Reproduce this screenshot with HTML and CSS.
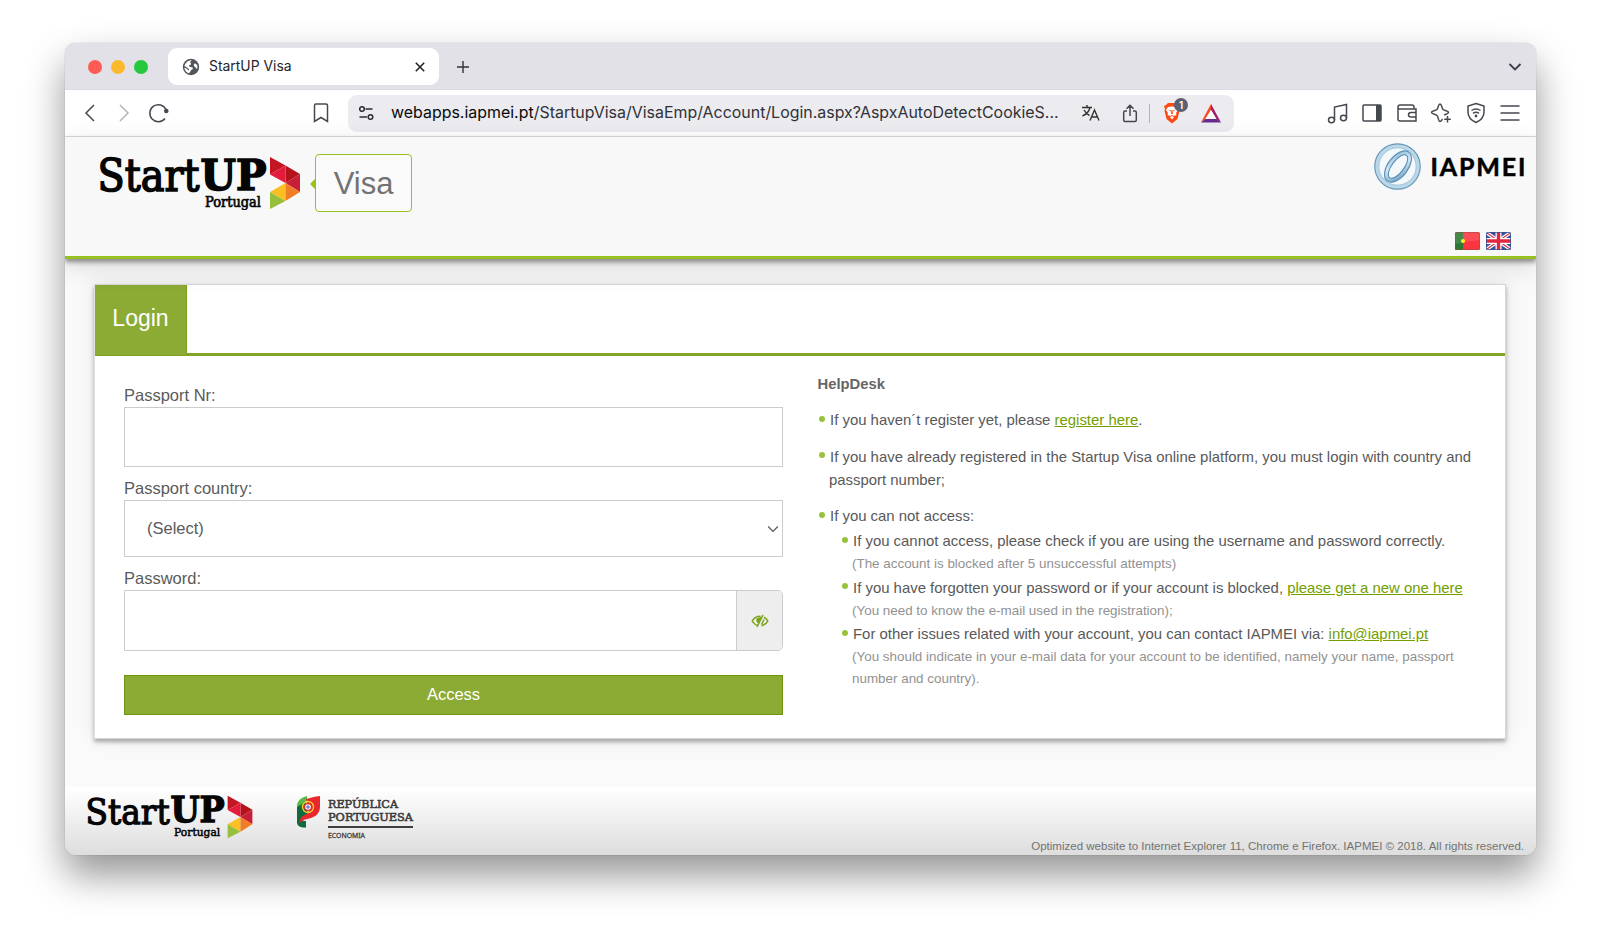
FILE: index.html
```html
<!DOCTYPE html>
<html lang="en">
<head>
<meta charset="utf-8">
<title>StartUP Visa</title>
<link rel="stylesheet" href="styles.css">
</head>
<body>
<svg class="defs" width="0" height="0">
  <symbol id="startup-logo" viewBox="0 0 204 54">
    <g font-family="'DejaVu Serif', serif" fill="#050505">
      <text x="-.5" y="35" font-size="44" textLength="102" lengthAdjust="spacingAndGlyphs" stroke="#050505" stroke-width="1.600">Start</text>
      <text x="102.500" y="33.500" font-size="43" font-weight="bold" textLength="66" lengthAdjust="spacingAndGlyphs" stroke="#050505" stroke-width="1.600">UP</text>
      <text x="107" y="50.500" font-size="14.500" textLength="56" lengthAdjust="spacingAndGlyphs" stroke="#050505" stroke-width=".7">Portugal</text>
    </g>
    <path fill="#c31622" d="M172 1L187.500 9.500L172 18.500Z"/>
    <path fill="#b5131c" d="M187.500 9.500L202 18L187.500 27Z"/>
    <path fill="#e31b3c" d="M172 18.500L187.500 9.500V27Z"/>
    <path fill="#c91f36" d="M187.500 27L202 18V36Z"/>
    <path fill="#fbbf24" d="M172 36L187.500 27V45Z"/>
    <path fill="#f07e26" d="M187.500 27L202 36L187.500 45Z"/>
    <path fill="#97bf3c" d="M172 36L187.500 45L172 53Z"/>
  </symbol>
</svg>
<div class="window">
  <div class="tabbar">
    <div class="lights"><i class="red"></i><i class="yellow"></i><i class="green"></i></div>
    <div class="tab">
      <svg width="18" height="18" viewBox="0 0 18 18"><circle cx="9" cy="9" r="8.200" fill="#51565c"/><path fill="#fff" d="M10 2.300C8.200 3.200 7.800 4.200 8.800 5.300C9.600 6.500 8.400 7 7.200 7.300C6.300 8 7 8.700 8.500 8.900L10.500 9.500C11.500 10.500 10.500 11.500 9.300 12C8.300 13 8.200 14.300 6.800 15.300C4.500 14.600 2.600 12.300 2.300 9.800L4.500 10.500C5.500 11 6 12.500 7 12.500C7.600 11 6 10.200 4.600 9.300L2.500 8.200C3 5 6 2.200 10 2.300ZM12.500 5.500C13.300 5.300 14.700 6 15.300 7.500C15.600 9 15.400 10 14.900 11C13.800 10.500 14 9 12.700 8.700C11.500 8 11.500 6.300 12.500 5.500Z"/></svg>
      <span>StartUP Visa</span>
      <svg width="12" height="12" viewBox="0 0 12 12"><path d="M1.800 1.800L10.200 10.200M10.200 1.800L1.800 10.200" stroke="#222" stroke-width="1.600"/></svg>
    </div>
    <svg class="plus" width="14" height="14" viewBox="0 0 14 14"><path d="M7 1V13M1 7H13" stroke="#333" stroke-width="1.400"/></svg>
    <svg class="more" width="14" height="10" viewBox="0 0 14 10"><path d="M1.500 2L7 7.500L12.500 2" fill="none" stroke="#3b3f4a" stroke-width="1.800"/></svg>
  </div>
  <div class="toolbar">
    <div class="nav">
      <svg width="20" height="20" viewBox="0 0 20 20"><path d="M14 2L6 10L14 18" class="ln"/></svg>
      <svg width="20" height="20" viewBox="0 0 20 20"><path d="M6 2L14 10L6 18" class="ln pale"/></svg>
      <svg width="20" height="20" viewBox="0 0 20 20"><path d="M18 6.500A8.500 8.500 0 1 0 17 15.500" class="ln"/><circle cx="18.300" cy="8" r="2.300" fill="#45484f"/></svg>
    </div>
    <svg class="bookmark" width="16" height="20" viewBox="0 0 16 20"><path d="M1.500 2.500Q1.500 1 3 1H13Q14.500 1 14.500 2.500V18.500L8 14.500L1.500 18.500Z" class="ln"/></svg>
    <div class="urlbar">
      <svg width="16" height="16" viewBox="0 0 16 16"><g fill="none" stroke="#2b2d33" stroke-width="1.500"><circle cx="4" cy="4" r="2.300"/><path d="M7.500 4H14.500M1.500 12H9"/><circle cx="12.500" cy="12" r="2.300"/></g></svg>
      <span class="url"><b>webapps.iapmei.pt</b>/StartupVisa/VisaEmp/Account/Login.aspx?AspxAutoDetectCookieS...</span>
      <svg class="translate" width="20" height="18" viewBox="0 0 20 18"><g fill="none" stroke="#333" stroke-width="1.400"><path d="M1 3.500H11M6 1V3.500M9 3.500C8 7.500 5 10.500 1.500 12M3 6C4.500 8.500 6.500 10.500 8.500 11.500M9 16.500L13.500 6L18 16.500M10.500 13H16.500"/></g></svg>
      <svg class="share" width="16" height="19" viewBox="0 0 16 19"><path d="M5 7H3Q1.700 7 1.700 8.300V16Q1.700 17.500 3 17.500H13Q14.300 17.500 14.300 16V8.300Q14.300 7 13 7H11M8 12V1.300M4.500 4.700L8 1.200L11.500 4.700" class="ln"/></svg>
      <i class="sep"></i>
      <div class="shield">
        <svg width="18" height="22" viewBox="0 0 18 22"><path fill="#fb4a12" d="M5 1H13L15 3L17 4L16 7L16.500 9L14.500 17L9 21.500L3.500 17L1.500 9L2 7L1 4L3 3Z"/><path fill="#fff" d="M5 5L9 4.500L13 5L15 8L13 11L13.500 13L11 14L9 13L7 14L4.500 13L5 11L3 8ZM7 15L9 14L11 15L9 17.500Z"/><path fill="#fb4a12" d="M5 7.500L8 8.500V9.500ZM13 7.500L10 8.500V9.500ZM8.500 8H9.500L10 11.500L9 12.300L8 11.500Z"/></svg>
        <span>1</span>
      </div>
      <svg class="bat" width="22" height="19" viewBox="0 0 22 19"><path fill="#ff4724" d="M11 0V6L5 15.500L1 18.500Z"/><path fill="#9e1f63" d="M11 0L21 18.500L16.500 15.500L11 6Z"/><path fill="#662d91" d="M1 18.500L5.500 15H16.500L21 18.500Z"/><path fill="#fff" d="M11 6L16.500 15H5.500Z"/></svg>
    </div>
    <div class="tools">
      <svg width="22" height="22" viewBox="0 0 22 22"><g class="ln"><ellipse cx="4.500" cy="18" rx="3" ry="2.700"/><ellipse cx="16.500" cy="16" rx="3" ry="2.700"/><path d="M7.500 18V5L19.500 2.500V16"/></g></svg>
      <svg width="22" height="22" viewBox="0 0 22 22"><rect x="2" y="3" width="18" height="16" rx="1" class="ln"/><path fill="#45484f" d="M15 3H20V19H15Z"/></svg>
      <svg width="22" height="22" viewBox="0 0 22 22"><g class="ln"><path d="M4 3H16Q18 3 18 5V7H20V19H4Q2 19 2 17V5Q2 3 4 3ZM2 6Q2.500 7 4 7H18M20 10.500H15Q12.500 10.500 12.500 13Q12.500 15 15 15H20"/></g></svg>
      <svg width="22" height="22" viewBox="0 0 22 22"><path class="ln" d="M12.500 17C11.500 18.500 11 19.500 10 19.500C8.300 19.500 8.300 14.500 7 13.500C5.800 12.300 1.500 12 1.500 10.500C1.500 9 5.800 8.500 7 7.500C8.300 6 8.300 2 10 2C11.700 2 11.700 6 13 7.500C14.200 8.500 18.500 9 18.500 10.500C18.500 12 15.500 12 14 13M17.500 14V20.500M14.200 17.300H20.800"/></svg>
      <svg width="22" height="22" viewBox="0 0 22 22"><g class="ln"><path d="M11 1.500L19 4V10C19 15.500 15.500 18.500 11 20.500C6.500 18.500 3 15.500 3 10V4Z"/><path d="M6.500 8.500Q11 5.500 15.500 8.500M8 11.300Q11 9.300 14 11.300"/></g><circle cx="11" cy="14" r="1.400" fill="#45484f"/></svg>
      <svg width="22" height="22" viewBox="0 0 22 22"><path class="ln" d="M1.500 4H20.500M1.500 11H20.500M1.500 18H20.500"/></svg>
    </div>
  </div>
  <header class="site-head">
    <svg class="logo" width="204" height="54"><use href="#startup-logo"/></svg>
    <div class="visa">Visa</div>
    <div class="head-right">
      <svg class="iapmei" width="152" height="50" viewBox="0 0 152 50">
        <defs><linearGradient id="ring" x1="0" y1="0" x2="1" y2="1"><stop offset="0" stop-color="#8fb9d6"/><stop offset=".45" stop-color="#d5e9f5"/><stop offset="1" stop-color="#6d9fc2"/></linearGradient></defs>
        <circle cx="23.500" cy="25.500" r="20.500" fill="#f3f8fb" stroke="#bcd8e8" stroke-width="4"/>
        <circle cx="23.500" cy="25.500" r="22.700" fill="none" stroke="#6396ba" stroke-width="1.200"/>
        <circle cx="23.500" cy="25.500" r="18.700" fill="none" stroke="#a4c6dc" stroke-width="1"/>
        <g transform="rotate(37 24 25.500)"><ellipse cx="24" cy="25.500" rx="8" ry="16" fill="none" stroke="url(#ring)" stroke-width="4"/><ellipse cx="24" cy="25.500" rx="10" ry="18" fill="none" stroke="#5f93b8" stroke-width="1.200"/><ellipse cx="24" cy="25.500" rx="6" ry="14" fill="#f3f8fb" stroke="#5088b0"/></g>
        <text x="56.500" y="34.500" font-family="Lato, sans-serif" font-weight="bold" font-size="25" textLength="95" lengthAdjust="spacing" fill="#000" stroke="#000" stroke-width=".5">IAPMEI</text>
      </svg>
      <div class="flags">
        <svg width="25" height="18" viewBox="0 0 25 18"><rect width="25" height="18" rx="1.500" fill="#fa3540"/><path fill="#2c7a35" d="M1.500 0H8V18H1.500Q0 18 0 16.500V1.500Q0 0 1.500 0Z"/><circle cx="8" cy="9" r="2" fill="#fff200"/><path fill="#fff" opacity=".12" d="M0 0H25V8Q12 9 0 12Z"/><rect x=".5" y=".5" width="24" height="17" rx="1.500" fill="none" stroke="#9c4a3a" opacity=".5"/></svg>
        <svg width="25" height="18" viewBox="0 0 25 18"><rect width="25" height="18" rx="1.500" fill="#34539b"/><path d="M1 1L24 17M24 1L1 17" stroke="#fff" stroke-width="3.500"/><path d="M1 1L24 17M24 1L1 17" stroke="#e0354a" stroke-width="1.200"/><path d="M12.500 0V18M0 9H25" stroke="#fff" stroke-width="6"/><path d="M12.500 0V18M0 9H25" stroke="#e02640" stroke-width="3.400"/><rect x=".5" y=".5" width="24" height="17" rx="1.500" fill="none" stroke="#34508c" opacity=".7"/></svg>
      </div>
    </div>
  </header>
  <main>
    <section class="card">
      <div class="card-tabs"><h1>Login</h1></div>
      <div class="card-body">
        <form class="form">
          <label>Passport Nr:</label>
          <div class="field"></div>
          <label>Passport country:</label>
          <div class="field select"><span>(Select)</span><svg width="12" height="8" viewBox="0 0 12 8"><path d="M1.200 1.500L6 6.300L10.800 1.500" fill="none" stroke="#555" stroke-width="1.200"/></svg></div>
          <label>Password:</label>
          <div class="field password">
            <div class="eye"><svg width="18" height="14" viewBox="0 0 18 14"><g fill="none" stroke="#7ca31c" stroke-width="1.500"><path d="M7 11.500C4.500 11 2.500 9.300 1.200 7C3 3.800 6 2.300 9.500 2.300M13 3.200C14.700 4 16 5.300 16.800 7C15.500 9.500 13.500 11 10.500 11.700M12 1L6 13M13 5.500L10.500 10.500"/></g><path d="M5.500 4.500L11 2.500L7.500 9.500Q4.500 8 5.500 4.500Z" fill="#7ca31c"/></svg></div>
          </div>
          <button type="button">Access</button>
        </form>
        <div class="help">
          <h2>HelpDesk</h2>
          <ul>
            <li>If you haven´t register yet, please <a>register here</a>.</li>
            <li>If you have already registered in the Startup Visa online platform, you must login with country and<br><span class="wrap">passport number;</span></li>
            <li>If you can not access:
              <ul>
                <li>If you cannot access, please check if you are using the username and password correctly.<small>(The account is blocked after 5 unsuccessful attempts)</small></li>
                <li>If you have forgotten your password or if your account is blocked, <a>please get a new one here</a><small>(You need to know the e-mail used in the registration);</small></li>
                <li>For other issues related with your account, you can contact IAPMEI via: <a>info@iapmei.pt</a><small>(You should indicate in your e-mail data for your account to be identified, namely your name, passport<br>number and country).</small></li>
              </ul>
            </li>
          </ul>
        </div>
      </div>
    </section>
  </main>
  <footer>
    <svg class="flogo" width="168" height="44" viewBox="0 0 204 54" preserveAspectRatio="none"><use href="#startup-logo" width="204" height="54"/></svg>
    <svg class="rp" width="120" height="46" viewBox="0 0 120 46">
      <path fill="#0f6b3c" d="M9 4C4 5 1 8 1 13V28C2 32 6 33 10 32.500V26C6 26 5 25 8 22L12 18Z"/>
      <path fill="#58b947" d="M11 1C4 3 1 6 1 12L6 9L11 5Z"/>
      <path fill="#e8262d" d="M10 4C14 3.500 19 1 24 1V12C24 20 17 23 11 24C7 25 5 26 4.500 28C3 23 6 21 10 19.500L13 17Z"/>
      <circle cx="12" cy="12" r="5.500" fill="none" stroke="#f3cf22" stroke-width="1.400"/><circle cx="12" cy="12" r="3.400" fill="#fff" stroke="#e8262d" stroke-width="1.200"/><path d="M12 10V14M10 12H14" stroke="#4662a5"/>
      <g fill="#3f3d3c" stroke="#3f3d3c">
        <g font-family="'DejaVu Serif', serif" stroke-width=".6"><text x="32" y="13" font-size="11.500" textLength="70" lengthAdjust="spacingAndGlyphs">REPÚBLICA</text>
        <text x="32" y="26" font-size="11.500" textLength="85" lengthAdjust="spacingAndGlyphs">PORTUGUESA</text></g>
        <rect x="32" y="31" width="85" height="2" stroke="none"/>
        <text x="32" y="43" font-family="'Noto Sans', sans-serif" stroke-width=".3" font-size="7.500" textLength="37" lengthAdjust="spacingAndGlyphs">ECONOMIA</text>
      </g>
    </svg>
    <p>Optimized website to Internet Explorer 11, Chrome e Firefox. IAPMEI © 2018. All rights reserved.</p>
  </footer>
</div>
</body>
</html>
```
FILE: styles.css
```css
* { box-sizing: border-box; }
body { margin: 0; padding: 43px 64px 0 65px; height: 940px; overflow: hidden; background: #fff; font-family: "Liberation Sans", Arial, sans-serif; color: #5a5a5a; }
svg { display: block; flex: none; overflow: visible; }
.defs { position: absolute; }
.ln { fill: none; stroke: #45484f; stroke-width: 1.5; }
.pale { stroke: #b3b5ba; }
.window { width: 1471px; height: 812px; border-radius: 11px; background: #fafafa; overflow: hidden; display: flex; flex-direction: column; box-shadow: 0 0 1px rgba(0,0,0,.45), 0 20px 38px rgba(0,0,0,.42); }

.tabbar { height: 46px; flex: none; background: #e2e1e7; display: flex; align-items: center; padding: 1px 14px 0 23px; }
.lights { display: flex; gap: 9px; width: 80px; }
.lights i { width: 14px; height: 14px; border-radius: 50%; }
.red { background: #fe5b54; }
.yellow { background: #fdb92c; }
.green { background: #26c83f; }
.tab { width: 271px; height: 37px; background: #fff; border-radius: 9px; display: flex; align-items: center; padding: 0 13px 0 14px; font: 13.9px Inter, sans-serif; color: #24262b; }
.tab span { margin: -1px 0 0 9px; flex: 1; }
.plus { margin-left: 17px; }
.more { margin-left: auto; }

.toolbar { height: 48px; flex: none; background: #fff; border-top: 1px solid #dcdbe2; border-bottom: 1px solid #dedde4; display: flex; align-items: center; padding: 0 15px 0 15px; }
.nav { display: flex; gap: 14px; width: 233px; }
.bookmark { margin: 0 19px 0 0; }
.urlbar { width: 886px; height: 37px; border-radius: 9px; background: #ecebf0; display: flex; align-items: center; padding-left: 10px; font: 15.95px Inter, sans-serif; color: #303238; }
.url { width: 690px; padding-left: 17px; margin-top: -1px; white-space: nowrap; flex: none; }
.url b { font-weight: 400; color: #08090b; }
.translate { margin-left: 17px; }
.share { margin-left: 21px; }
.sep { width: 1px; height: 19px; background: #b4b4bd; margin: 0 13px 0 11px; }
.shield { position: relative; }
.shield span { position: absolute; left: 11px; top: -4px; width: 14px; height: 14px; border-radius: 7px; background: #5d6070; color: #fff; font: 600 10px/14px Inter, sans-serif; text-align: center; }
.bat { margin-left: 19px; }
.tools { display: flex; gap: 12.4px; margin-left: auto; }

.site-head { height: 122px; flex: none; position: relative; background: #f8f8f8; border-bottom: 3px solid #98c021; box-shadow: 0 3px 5px rgba(0,0,0,.42), 0 8px 26px rgba(0,0,0,.13); display: flex; padding: 17px 0 0 33px; }
.logo { margin-top: 2px; }
.visa { position: relative; margin-left: 13px; width: 97px; height: 58px; border: 1px solid #98c021; border-radius: 4px; font-size: 31px; line-height: 58px; text-align: center; color: #737373; background: #fafafa; }
.visa::before { content: ""; position: absolute; left: -6px; top: 23px; border: solid transparent; border-width: 6px 6px 6px 0; border-right-color: #98c021; }
.head-right { margin: -13px 10px 0 auto; display: flex; flex-direction: column; align-items: flex-end; }
.flags { display: flex; gap: 6px; margin: 41px 15px 0 0; }

main { height: 528px; flex: none; padding: 25px 30px 0 29px; }
.card { height: 455px; background: #fff; border: 1px solid #d6d6d6; border-left-color: #e2e2e2; box-shadow: 0 3px 4px rgba(0,0,0,.3), 0 0 18px rgba(0,0,0,.09); }
.card-tabs { display: flex; height: 71px; border-bottom: 3px solid #83a526; }
h1 { margin: 0; width: 92px; height: 71px; background: #8cab34; color: #fff; font-weight: 400; font-size: 23px; line-height: 66px; text-align: center; border-right: 1px solid #7da023; border-bottom: 1px solid #7da023; }
.card-body { display: flex; padding: 0 0 0 29px; }
.form { width: 659px; padding-top: 27px; font-size: 16.5px; }
label { display: block; height: 24px; line-height: 24px; }
.field { height: 60px; border: 1px solid #ccc; margin-bottom: 9px; background: #fff; }
.select { height: 57px; display: flex; align-items: center; justify-content: space-between; padding: 0 3px 0 22px; }
.password { height: 61px; margin-bottom: 24px; border-radius: 0 5px 5px 0; display: flex; justify-content: flex-end; }
.eye { width: 46px; background: #eee; border-left: 1px solid #ccc; border-radius: 0 4px 4px 0; display: flex; align-items: center; justify-content: center; }
button { display: block; width: 100%; height: 40px; background: #8cab34; border: 1px solid #6f920f; color: #fff; font: 16.5px "Liberation Sans", Arial, sans-serif; padding: 0 0 2px; }
.help { padding: 17px 0 0 34.5px; font-size: 14.92px; line-height: 23px; white-space: nowrap; color: #595959; }
h2 { margin: 0 0 12px; font-size: 14.8px; line-height: 23px; color: #666; }
ul { list-style: none; margin: 0; padding: 0; }
li { position: relative; padding-left: 12.5px; margin-bottom: 13.5px; }
li::before { content: ""; position: absolute; left: 1px; top: 7.5px; width: 6px; height: 6px; border-radius: 50%; background: #99c23c; }
.wrap { margin-left: -1px; }
ul ul { padding: 2px 0 0 10.5px; }
ul ul li { margin: 0 0 .6px; }
a { color: #739e00; text-decoration: underline; }
small { display: block; margin-left: -1px; font-size: 13.42px; line-height: 21.8px; padding-top: 1.2px; color: #929292; }

footer { height: 68px; flex: none; background: linear-gradient(#fff, #ddd); display: flex; padding: 8px 12px 0 21px; }
.rp { margin-left: 42px; }
footer p { margin: 44px 0 0 auto; font-size: 11.52px; line-height: 15px; color: #727272; white-space: nowrap; }
```
